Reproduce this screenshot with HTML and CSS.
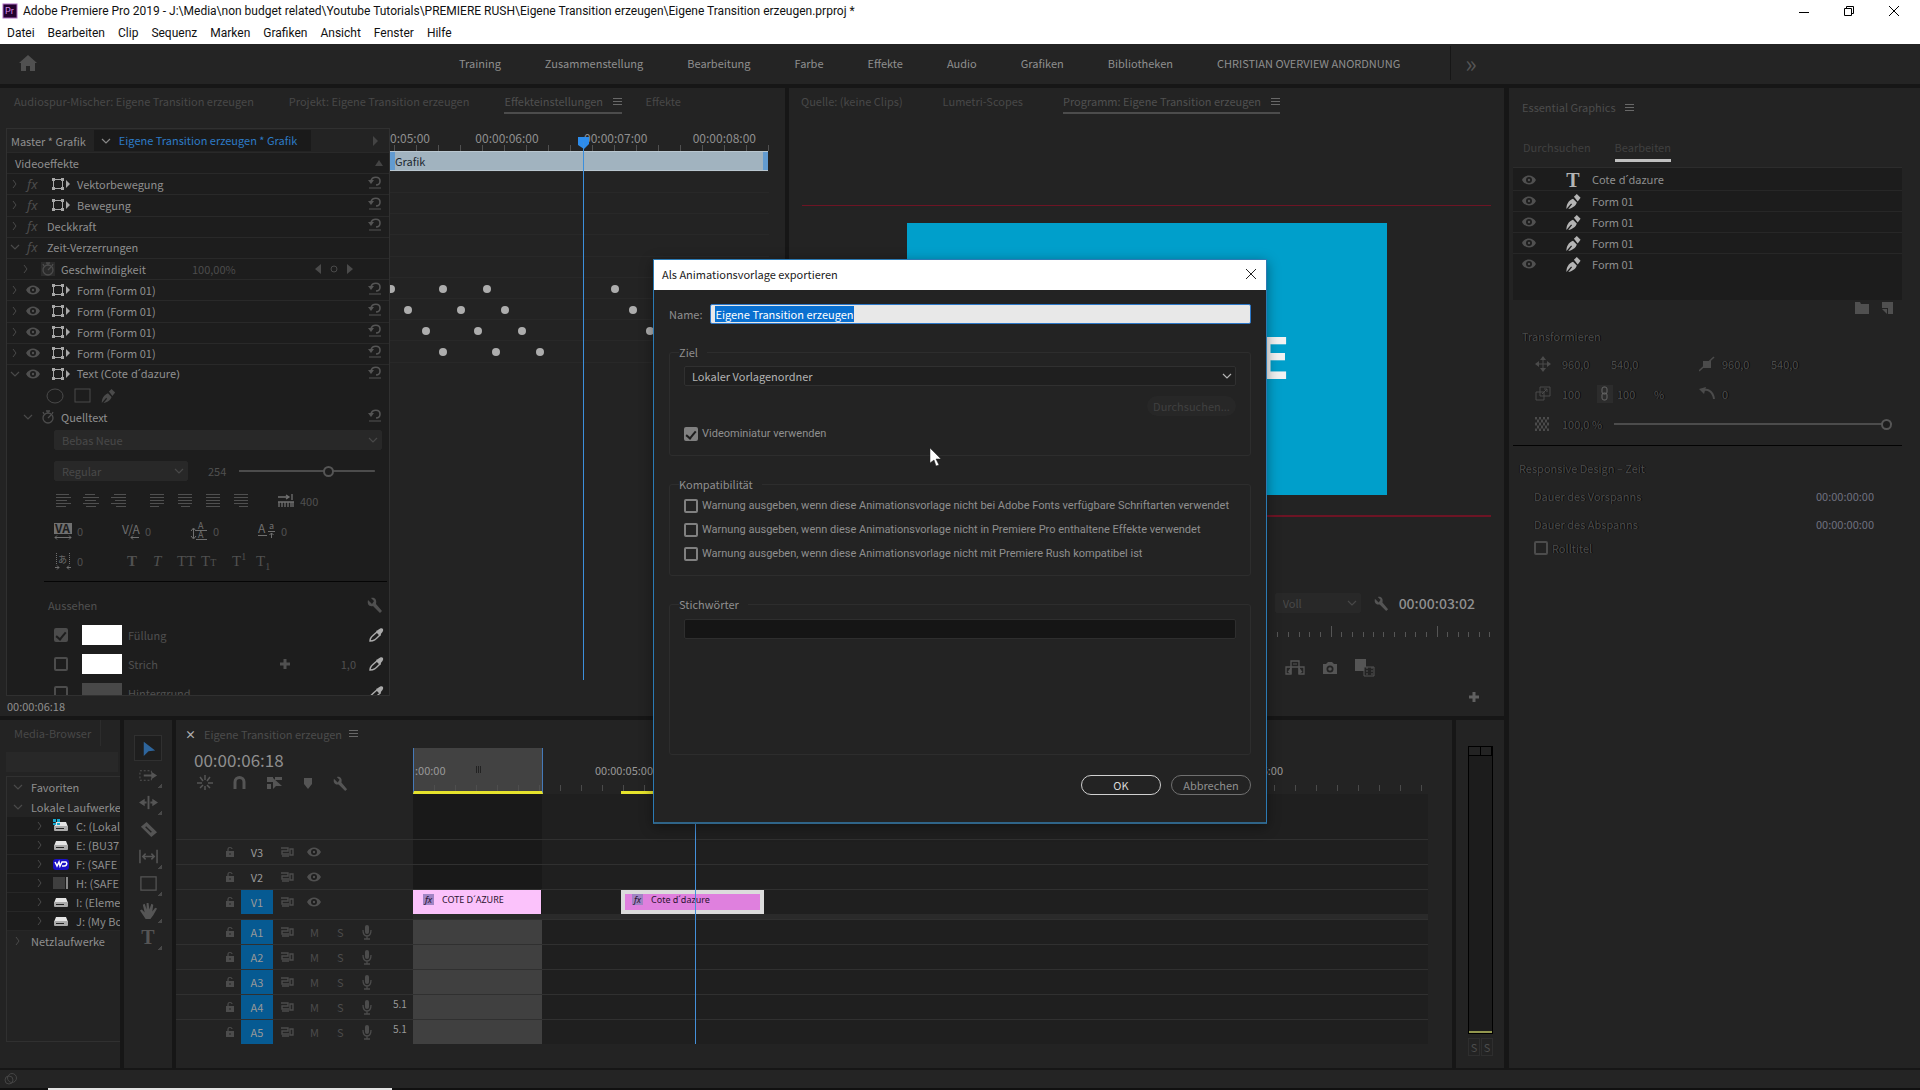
FILE: index.html
```html
<!DOCTYPE html>
<html lang="de">
	<head>
		<meta charset="UTF-8">
		<title>Adobe Premiere Pro 2019</title>
		<link rel="stylesheet" href="styles.css">
	</head>
	<body>
		<!-- shared icons -->
		<svg class="defs" width="0" height="0">
			<symbol id="i-menu" viewBox="0 0 9 9"><path d="M0 1.5h9M0 4.5h9M0 7.5h9" stroke="currentColor"/></symbol>
			<symbol id="i-right" viewBox="0 0 8 10"><path d="M2 1l3 4-3 4" fill="none" stroke="currentColor"/></symbol>
			<symbol id="i-down" viewBox="0 0 10 8"><path d="M1 2l4 4 4-4" fill="none" stroke="currentColor" stroke-width="1.2"/></symbol>
			<symbol id="i-box" viewBox="0 0 20 14"><path d="M2.5 2.5h9v9h-9z" fill="none" stroke="currentColor"/><path d="M1 1h3v3H1zM10 1h3v3h-3zM1 10h3v3H1zM10 10h3v3h-3zM15 3l4 4-4 4z" fill="currentColor"/></symbol>
			<symbol id="i-reset" viewBox="0 0 14 14"><path d="M3 6c1-5 9-5 9 0 0 3-2 4-4 4" fill="none" stroke="currentColor" stroke-width="1.6"/><path d="M0 5h6L3 9zM1 12.5h12v1H1z" fill="currentColor"/></symbol>
			<symbol id="i-eye" viewBox="0 0 14 10"><path d="M0 5c3-6 11-6 14 0-3 6-11 6-14 0z" fill="currentColor"/><circle cx="7" cy="5" r="3" fill="#1d1d1d"/><circle cx="7" cy="5" r="1.2" fill="currentColor"/></symbol>
			<symbol id="i-pen" viewBox="0 0 16 18"><path d="M1 17c0-5 2-9 7-11l4 4c-1 4-5 6-9 7l4-5-1-1z" fill="currentColor"/><path d="M9 4l3-3 4 4-3 4z" fill="currentColor"/></symbol>
			<symbol id="i-clock" viewBox="0 0 14 14"><circle cx="7" cy="8" r="5" fill="none" stroke="currentColor" stroke-width="1.3"/><path d="M5 1h4M7 1v2M2 2l1 2M12 2l-1 2M7 8l3-3" stroke="currentColor" stroke-width="1.3"/></symbol>
			<symbol id="i-wrench" viewBox="0 0 16 16"><path d="M1 3l4 4 2-3-3-3c4-1 6 2 5 6l6 7-2 2-7-7C2 10 0 7 1 3z" fill="currentColor"/></symbol>
			<symbol id="i-drop" viewBox="0 0 16 16"><path d="M2 14c0-3 1-4 7-9l3 3c-5 5-6 6-10 6z" fill="none" stroke="currentColor" stroke-width="1.5"/><path d="M8 4l2-1c3-3 6-2 5 1-1 2-2 2-2 3l-1 2z" fill="currentColor"/></symbol>
			<symbol id="i-plus" viewBox="0 0 12 12"><path d="M6 1v10M1 6h10" stroke="currentColor" stroke-width="3"/></symbol>
			<symbol id="i-lock" viewBox="0 0 10 12"><path d="M1 5h8v6H1z" fill="currentColor"/><path d="M3 5V3c0-2 4-2 4 0" fill="none" stroke="currentColor" stroke-width="1.2"/><path d="M5 7v2" stroke="#222"/></symbol>
			<symbol id="i-sync" viewBox="0 0 14 12"><path d="M0 2h7v3H1v3h7M1 10h7M9 3h3v6H9z" fill="none" stroke="currentColor" stroke-width="1.4"/></symbol>
			<symbol id="i-mic" viewBox="0 0 12 16"><rect x="4" y="1" width="4" height="9" rx="2" fill="currentColor"/><path d="M2 6c0 8 8 8 8 0M6 12v3M3 15h6" fill="none" stroke="currentColor" stroke-width="1.3"/></symbol>
			<symbol id="i-drive" viewBox="0 0 16 14"><path d="M3 3h10l2 5H1z" fill="#e4e4e4"/><rect x="1" y="7" width="14" height="5" rx="1" fill="#aaa"/><path d="M3 9.5h8" stroke="#222"/></symbol>
		</svg>

		<header class="titlebar">
			<svg class="app-icon" viewBox="0 0 16 16"><rect x="1" y="1" width="14" height="14" fill="#23002e" stroke="#b06cc4"/><text x="3" y="11" font-size="9" fill="#d78be8">Pr</text></svg>
			<span class="caption">Adobe Premiere Pro 2019 - J:\Media\non budget related\Youtube Tutorials\PREMIERE RUSH\Eigene Transition erzeugen\Eigene Transition erzeugen.prproj *</span>
			<button class="win-btn" aria-label="Minimieren"><svg width="12" height="12"><path d="M1 7.500h10" stroke="#000"/></svg></button>
			<button class="win-btn" aria-label="Verkleinern"><svg width="12" height="12"><path d="M1.500 3.500h7v7h-7zM3.500 3V1.500h7v7H9" fill="none" stroke="#000"/></svg></button>
			<button class="win-btn" aria-label="Schließen"><svg width="12" height="12"><path d="M1 1l10 10M11 1L1 11" stroke="#000"/></svg></button>
		</header>
		<nav class="menubar">
			<a href="#">Datei</a><a href="#">Bearbeiten</a><a href="#">Clip</a><a href="#">Sequenz</a><a href="#">Marken</a><a href="#">Grafiken</a><a href="#">Ansicht</a><a href="#">Fenster</a><a href="#">Hilfe</a>
		</nav>

		<nav class="workspaces">
			<svg class="home" viewBox="0 0 18 16"><path d="M9 0l9 8h-2v8h-5v-5H7v5H2V8H0z" fill="currentColor"/></svg>
			<a href="#">Training</a><a href="#">Zusammenstellung</a><a href="#">Bearbeitung</a><a href="#">Farbe</a><a href="#">Effekte</a><a href="#">Audio</a><a href="#">Grafiken</a><a href="#">Bibliotheken</a><a href="#">CHRISTIAN OVERVIEW ANORDNUNG</a>
			<span class="more">»</span>
		</nav>

		<main class="workspace">
			<div class="upper">
				<section class="panel effects">
					<div class="tabs effects-tabs">
						<a href="#">Audiospur-Mischer: Eigene Transition erzeugen</a>
						<a href="#">Projekt: Eigene Transition erzeugen</a>
						<a href="#" class="active">Effekteinstellungen <svg class="menu-icon"><use href="#i-menu"/></svg></a>
						<a href="#">Effekte</a>
					</div>
					<div class="effects-body">
						<div class="props">
							<div class="props-head">
								<span>Master * Grafik</span>
								<span class="clip-name"><svg width="10" height="8"><use href="#i-down"/></svg>Eigene Transition erzeugen * Grafik</span>
								<svg width="6" height="10"><path d="M0 0l5 5-5 5z" fill="#444"/></svg>
							</div>
							<div class="rows">
								<div class="row section"><span>Videoeffekte</span><svg class="end" width="9" height="6"><path d="M0 6l4-6 4 6z" fill="#444"/></svg></div>
								<div class="row"><svg class="tw"><use href="#i-right"/></svg><i class="fx">fx</i><svg class="box"><use href="#i-box"/></svg><span>Vektorbewegung</span><svg class="reset"><use href="#i-reset"/></svg></div>
								<div class="row"><svg class="tw"><use href="#i-right"/></svg><i class="fx">fx</i><svg class="box"><use href="#i-box"/></svg><span>Bewegung</span><svg class="reset"><use href="#i-reset"/></svg></div>
								<div class="row"><svg class="tw"><use href="#i-right"/></svg><i class="fx">fx</i><span>Deckkraft</span><svg class="reset"><use href="#i-reset"/></svg></div>
								<div class="row"><svg class="tw"><use href="#i-down"/></svg><i class="fx">fx</i><span>Zeit-Verzerrungen</span></div>
								<div class="row speed"><svg class="tw"><use href="#i-right"/></svg><svg class="watch boxed"><use href="#i-clock"/></svg><span class="prop">Geschwindigkeit</span><span class="value">100,00%</span>
									<svg class="keynav" width="38" height="12"><path d="M6 1v10L0 6zM32 1v10l6-5z" fill="currentColor"/><circle cx="19" cy="6" r="3" fill="none" stroke="currentColor"/></svg></div>
								<div class="row form"><svg class="tw"><use href="#i-right"/></svg><svg class="eye"><use href="#i-eye"/></svg><svg class="box"><use href="#i-box"/></svg><span>Form (Form 01)</span><svg class="reset"><use href="#i-reset"/></svg></div>
								<div class="row form"><svg class="tw"><use href="#i-right"/></svg><svg class="eye"><use href="#i-eye"/></svg><svg class="box"><use href="#i-box"/></svg><span>Form (Form 01)</span><svg class="reset"><use href="#i-reset"/></svg></div>
								<div class="row form"><svg class="tw"><use href="#i-right"/></svg><svg class="eye"><use href="#i-eye"/></svg><svg class="box"><use href="#i-box"/></svg><span>Form (Form 01)</span><svg class="reset"><use href="#i-reset"/></svg></div>
								<div class="row form"><svg class="tw"><use href="#i-right"/></svg><svg class="eye"><use href="#i-eye"/></svg><svg class="box"><use href="#i-box"/></svg><span>Form (Form 01)</span><svg class="reset"><use href="#i-reset"/></svg></div>
								<div class="row form"><svg class="tw"><use href="#i-down"/></svg><svg class="eye"><use href="#i-eye"/></svg><svg class="box"><use href="#i-box"/></svg><span class="accent">Text (Cote d´dazure)</span><svg class="reset"><use href="#i-reset"/></svg></div>
							</div>
							<div class="shapes">
								<svg width="20" height="16"><ellipse cx="10" cy="8" rx="8" ry="7" fill="none" stroke="currentColor"/></svg>
								<svg width="17" height="16"><rect x="1" y="1" width="15" height="13" fill="none" stroke="currentColor"/></svg>
								<svg width="16" height="16"><use href="#i-pen"/></svg>
							</div>
							<div class="row source"><svg class="tw"><use href="#i-down"/></svg><svg class="watch"><use href="#i-clock"/></svg><span>Quelltext</span><svg class="reset"><use href="#i-reset"/></svg></div>
							<div class="text-props">
								<div class="pick dim"><select aria-label="Schriftart"><option>Bebas Neue</option></select><svg><use href="#i-down"/></svg></div>
								<div class="line size-line">
									<div class="pick dim style"><select aria-label="Schriftschnitt"><option>Regular</option></select><svg><use href="#i-down"/></svg></div>
									<label for="fontSize">254</label>
									<input type="range" id="fontSize" min="0" max="100" value="67">
								</div>
								<div class="line aligns">
									<svg width="194" height="16" stroke="currentColor"><path d="M2 1.500h13M2 4.500h15M2 7.500h11M2 10.500h15M2 13.500h10M31 1.500h10M29 4.500h16M31 7.500h11M29 10.500h16M32 13.500h10M60 1.500h12M57 4.500h15M61 7.500h11M57 10.500h15M62 13.500h10M96 1.500h14M96 4.500h14M96 7.500h14M96 10.500h14M96 13.500h9M124 1.500h14M124 4.500h14M124 7.500h14M124 10.500h14M127 13.500h9M152 1.500h14M152 4.500h14M152 7.500h14M152 10.500h14M152 13.500h14M180 1.500h14M180 4.500h14M180 7.500h14M180 10.500h14M185 13.500h9"/></svg>
									<svg class="tab" width="16" height="14"><path d="M0 3h11M8 1l3 2-3 2M14 0v6M0 8h16M1 8v5M4 8v5M7 8v5M10 8v5M13 8v5M15 8v5" fill="none" stroke="currentColor" stroke-width="1.3"/></svg>
									<span>400</span>
								</div>
								<div class="line spacing">
									<span><svg class="glyph"><path d="M0 1h18v11H0z" fill="currentColor"/><text x="1" y="11" class="inv">VA</text><path d="M1 15.500h16M3 13.500l-2 2 2 2M15 13.500l2 2-2 2" fill="none" stroke="currentColor"/></svg>0</span>
									<span><svg class="glyph"><text x="0" y="12">V/A</text><path d="M9 15.500h8M11 13.500l-2 2 2 2" fill="none" stroke="currentColor"/></svg>0</span>
									<span><svg class="glyph"><path d="M3.500 7v9M1 9l2.500-3L6 9M1 14l2.500 3L6 14M6 8.500h11M6 17.500h11" fill="none" stroke="currentColor"/><text x="8" y="7" class="small">A</text><text x="8" y="16" class="small">A</text></svg>0</span>
									<span><svg class="glyph"><text x="0" y="11">A</text><text x="11" y="7" class="small">a</text><path d="M0 13.500h9M10 9.500h7M13.500 16v-5M11.500 13l2-2 2 2" fill="none" stroke="currentColor"/></svg>0</span>
								</div>
								<div class="line styles">
									<span><svg class="glyph"><path d="M2.500 1v11M15.500 1v11" stroke="currentColor" stroke-dasharray="1 1"/><text x="4" y="11" class="small">あ</text><path d="M1 15.500h4M3 13.500l2 2-2 2M17 15.500h-4M15 13.500l-2 2 2 2" fill="none" stroke="currentColor"/></svg>0</span>
									<b class="t1">T</b><i>T</i><span class="caps">TT</span><span class="caps">T<small>T</small></span><span class="caps">T<sup>1</sup></span><span class="caps">T<sub>1</sub></span>
								</div>
							</div>
							<div class="look">
								<div class="look-head">Aussehen <svg><use href="#i-wrench"/></svg></div>
								<label class="paint"><input type="checkbox" checked><span class="swatch"></span>Füllung<svg><use href="#i-drop"/></svg></label>
								<label class="paint"><input type="checkbox"><span class="swatch"></span>Strich<span class="width"><svg class="add"><use href="#i-plus"/></svg>1,0</span><svg><use href="#i-drop"/></svg></label>
								<label class="paint"><input type="checkbox"><span class="swatch grey"></span>Hintergrund<svg><use href="#i-drop"/></svg></label>
							</div>
						</div>
						<div class="keys">
							<div class="key-ruler"><span>0:05:00</span><span>00:00:06:00</span><span>00:00:07:00</span><span>00:00:08:00</span></div>
							<div class="key-clip">Grafik</div>
							<svg class="key-canvas" width="380" height="552">
								<path d="M0 43.500h379M0 64.500h379M0 85.500h379M0 106.500h379M0 128.500h379M0 149.500h379M0 170.500h379M0 191.500h379M0 212.500h379M0 234.500h379" stroke="#282828"/>
								<g fill="#adadad"><circle cx="1" cy="161" r="4"/><circle cx="53" cy="161" r="4"/><circle cx="97" cy="161" r="4"/><circle cx="225" cy="161" r="4"/><circle cx="18" cy="182" r="4"/><circle cx="71" cy="182" r="4"/><circle cx="115" cy="182" r="4"/><circle cx="243" cy="182" r="4"/><circle cx="36" cy="203" r="4"/><circle cx="88" cy="203" r="4"/><circle cx="132" cy="203" r="4"/><circle cx="260" cy="203" r="4"/><circle cx="53" cy="224" r="4"/><circle cx="106" cy="224" r="4"/><circle cx="150" cy="224" r="4"/></g>
								<path d="M188 9h11v7l-5 5-6-4z" fill="#2d8ceb"/><path d="M193.500 14v538" stroke="#3c8fdc"/>
							</svg>
						</div>
					</div>
					<div class="panel-time">00:00:06:18</div>
				</section>

				<section class="panel monitor">
					<div class="tabs monitor-tabs">
						<a href="#">Quelle: (keine Clips)</a>
						<a href="#">Lumetri-Scopes</a>
						<a href="#" class="active">Programm: Eigene Transition erzeugen <svg class="menu-icon"><use href="#i-menu"/></svg></a>
					</div>
					<div class="stage"><div class="frame">E</div></div>
					<div class="monitor-bar">
						<div class="pick dim"><select aria-label="Auflösung"><option>Voll</option></select><svg><use href="#i-down"/></svg></div>
						<svg class="tool"><use href="#i-wrench"/></svg>
						<b>00:00:03:02</b>
					</div>
					<svg class="monitor-ruler" width="220" height="12" stroke="#555"><path d="M1.500 6v5M12.500 6v5M23.500 6v5M33.500 6v5M44.500 6v5M55.500 0v11M65.500 6v5M76.500 6v5M87.500 6v5M97.500 6v5M107.500 6v5M118.500 6v5M129.500 6v5M139.500 6v5M150.500 6v5M161.500 0v11M171.500 6v5M182.500 6v5M192.500 6v5M203.500 6v5M213.500 6v5"/></svg>
					<div class="monitor-tools">
						<svg width="20" height="16"><path d="M6 1h8v6H6zM1 7h5v7H1zM14 7h5v7h-5z" fill="none" stroke="currentColor" stroke-width="1.300"/><path d="M8 4h4M3 12l3-4v6M17 12l-3-4v6" stroke="currentColor" fill="currentColor"/></svg>
						<svg width="14" height="14"><path d="M0 3h3l2-2h4l2 2h3v10H0z" fill="currentColor"/><circle cx="7" cy="8" r="3.500" fill="#232323"/><circle cx="7" cy="8" r="1.800" fill="currentColor"/></svg>
						<svg width="20" height="18"><path d="M0 0h11v12H0z" fill="currentColor"/><path d="M9 8h10v9H9z" fill="#232323" stroke="currentColor"/><path d="M12 8v9M17 8v9" stroke="currentColor" stroke-dasharray="2 1"/></svg>
					</div>
					<svg class="monitor-add"><use href="#i-plus"/></svg>
				</section>
			</div>

			<div class="lower">
				<section class="panel browser">
					<div class="browser-tab">Media-Browser</div>
					<div class="browser-search"></div>
					<ul class="drives">
						<li><svg class="tw"><use href="#i-down"/></svg>Favoriten</li>
						<li><svg class="tw"><use href="#i-down"/></svg>Lokale Laufwerke</li>
						<li class="drive"><svg class="tw"><use href="#i-right"/></svg><svg class="disk"><use href="#i-drive"/><path d="M0 0h3v3H0zM4 0h3v3H4zM0 4h3v2H0zM4 4h3v2H4z" fill="#16a8cf"/></svg>C: (Lokal</li>
						<li class="drive"><svg class="tw"><use href="#i-right"/></svg><svg class="disk"><use href="#i-drive"/></svg>E: (BU37</li>
						<li class="drive"><svg class="tw"><use href="#i-right"/></svg><svg class="disk"><rect y="2" width="16" height="11" rx="3" fill="#1a10c4"/><path d="M2 5l2 4 2-4 1 4 2-4h4c2 2 0 4-2 4H9" fill="none" stroke="#fff" stroke-width="1.500"/></svg>F: (SAFE</li>
						<li class="drive"><svg class="tw"><use href="#i-right"/></svg><svg class="disk"><rect y="1" width="12" height="12" fill="#3f3f3f"/><rect x="13" y="1" width="2" height="12" fill="#888"/></svg>H: (SAFE</li>
						<li class="drive"><svg class="tw"><use href="#i-right"/></svg><svg class="disk"><use href="#i-drive"/></svg>I: (Eleme</li>
						<li class="drive"><svg class="tw"><use href="#i-right"/></svg><svg class="disk"><use href="#i-drive"/></svg>J: (My Bo</li>
						<li><svg class="tw"><use href="#i-right"/></svg>Netzlaufwerke</li>
					</ul>
				</section>
				<section class="panel tools">
					<button class="on" aria-label="Auswahl"><svg viewBox="0 0 20 20"><path d="M5 3l12 9-7 1-5 5z" fill="#2e659c"/></svg></button>
					<button aria-label="Spurauswahl"><svg viewBox="0 0 20 20"><path d="M1 5h12v10H1z" fill="none" stroke="currentColor" stroke-dasharray="2 2"/><path d="M5 9h8V6l6 4-6 4v-3H5z" fill="currentColor"/></svg></button>
					<button aria-label="Löschen und Lücke schließen"><svg viewBox="0 0 20 20"><path d="M10 3v14" stroke="currentColor" stroke-width="2"/><path d="M0 10l6-4v3h2v2H6v3zM20 10l-6-4v3h-2v2h2v3z" fill="currentColor"/></svg></button>
					<button class="plain" aria-label="Rasierklinge"><svg viewBox="0 0 20 20"><path d="M2 7l6-5 11 11-6 5z" fill="currentColor"/><path d="M7 7l6 6" stroke="#222" stroke-width="1.500"/></svg></button>
					<button aria-label="Unterschieben"><svg viewBox="0 0 20 20"><path d="M1 3v14M19 3v14M4 10h12M7 7l-3 3 3 3M13 7l3 3-3 3" fill="none" stroke="currentColor" stroke-width="1.600"/></svg></button>
					<button aria-label="Rechteck"><svg viewBox="0 0 20 20"><path d="M2 3h16v14H2z" fill="none" stroke="currentColor" stroke-width="1.300"/></svg></button>
					<button aria-label="Hand"><svg viewBox="0 0 20 20"><path d="M7 19l-6-9 2-1 3 3-2-8 2-1 2 6V2h2l1 7 2-6 2 1-1 7 3-4 2 1-4 7-3 4z" fill="currentColor"/></svg></button>
					<button class="type" aria-label="Text">T</button>
				</section>
				<section class="panel timeline">
					<div class="heads">
						<div class="seq-tab"><b>×</b><span>Eigene Transition erzeugen</span><svg class="menu-icon"><use href="#i-menu"/></svg></div>
						<div class="seq-time">00:00:06:18</div>
						<div class="seq-tools">
							<svg width="16" height="16"><path d="M8 0v5M8 11v4M0 8h5M11 8h5M3 2l3 4M13 2l-3 4M3 13l3-3M13 13l-3-3" stroke="currentColor" stroke-width="1.500"/></svg>
							<svg width="14" height="14"><path d="M2 13V6c0-6 9-6 9 0v7" fill="none" stroke="currentColor" stroke-width="3"/></svg>
							<svg width="16" height="16"><path d="M0 2h6v5H0zM0 9h4v5H0zM8 2h7v3H8zM6 3l9 8H9l-3 3z" fill="currentColor"/></svg>
							<svg width="10" height="12"><path d="M1 1h8v6l-4 5-4-5z" fill="currentColor"/></svg>
							<svg width="15" height="15"><use href="#i-wrench"/></svg>
						</div>
						<div class="track-heads video" id="videoHeads"></div>
						<div class="track-heads audio" id="audioHeads"></div>
					</div>
					<div class="lanes">
						<div class="time-ruler">
							<div class="range"><span>:00:00</span><svg width="6" height="7"><path d="M.5 0v7M2.500 0v7M4.500 0v7" stroke="#222"/></svg></div>
							<span class="t5">00:00:05:00</span>
							<span class="t15">00:00:15:00</span>
							<i class="render"></i>
						</div>
						<div class="lane gap"></div>
						<div class="lane"></div>
						<div class="lane"></div>
						<div class="lane clips">
							<div class="clip one"><i>fx</i>COTE D´AZURE</div>
							<div class="clip two"><i>fx</i>Cote d´dazure</div>
						</div>
						<div class="split"></div>
						<div class="lane sound"></div><div class="lane sound"></div><div class="lane sound"></div><div class="lane sound"></div><div class="lane sound"></div>
						<i class="playhead"></i>
					</div>
				</section>
				<section class="panel meters">
					<div class="meter"><i></i><i></i></div>
					<div class="solo"><button>S</button><button>S</button></div>
				</section>
			</div>

			<aside class="panel graphics">
				<div class="graphics-title">Essential Graphics <svg class="menu-icon"><use href="#i-menu"/></svg></div>
				<div class="graphics-tabs"><a href="#">Durchsuchen</a><a href="#" class="active">Bearbeiten</a></div>
				<ul class="layers">
					<li><svg class="eye"><use href="#i-eye"/></svg><b class="kind type">T</b><span class="accent">Cote d´dazure</span></li>
					<li><svg class="eye"><use href="#i-eye"/></svg><svg class="kind"><use href="#i-pen"/></svg>Form 01</li>
					<li><svg class="eye"><use href="#i-eye"/></svg><svg class="kind"><use href="#i-pen"/></svg>Form 01</li>
					<li><svg class="eye"><use href="#i-eye"/></svg><svg class="kind"><use href="#i-pen"/></svg>Form 01</li>
					<li><svg class="eye"><use href="#i-eye"/></svg><svg class="kind"><use href="#i-pen"/></svg>Form 01</li>
				</ul>
				<div class="layer-tools">
					<svg width="14" height="12"><path d="M0 0h5l1 2h8v10H0z" fill="currentColor"/></svg>
					<svg width="11" height="12"><path d="M0 0h11v12H6V6H0z" fill="currentColor"/><path d="M0 7l5 5V7z" fill="currentColor"/></svg>
				</div>
				<div class="transform engraved">
					<h3>Transformieren</h3>
					<div class="t-row">
						<svg width="16" height="16"><path d="M8 1v14M1 8h14" stroke="currentColor"/><path d="M8 0l3 4H5zM8 16l3-4H5zM0 8l4-3v6zM16 8l-4-3v6z" fill="currentColor"/></svg>
						<span>960,0</span><span>540,0</span>
						<svg width="16" height="16"><path d="M0 15L15 1" stroke="currentColor" stroke-width="1.500"/><path d="M4 5h8v7H4z" fill="currentColor"/></svg>
						<span>960,0</span><span>540,0</span>
					</div>
					<div class="t-row scale">
						<svg width="16" height="16"><path d="M5 1h10v9H5zM1 6h8v8H1zM7 8l5-5M9 3h3v3" fill="none" stroke="currentColor"/></svg>
						<span>100</span>
						<svg class="link" width="18" height="20"><path d="M1 1h16v18H1z" fill="#2c2c2c"/><rect x="6" y="3" width="5" height="7" rx="2" fill="none" stroke="#666"/><rect x="6" y="9" width="5" height="7" rx="2" fill="none" stroke="#666"/></svg>
						<span>100</span><span>%</span>
						<svg width="16" height="14"><path d="M3 4c5-3 11 0 12 8" fill="none" stroke="currentColor" stroke-width="2"/><path d="M0 2l7-2-2 7z" fill="currentColor"/></svg>
						<span>0</span>
					</div>
					<div class="t-row opacity">
						<svg width="14" height="14"><path d="M0 1h14M0 7h14M0 13h14" stroke="currentColor" stroke-width="3" stroke-dasharray="2 2"/><path d="M2 4h12M2 10h12" stroke="currentColor" stroke-width="3" stroke-dasharray="2 2"/></svg>
						<label for="opacity">100,0 %</label>
						<input type="range" id="opacity" min="0" max="100" value="100">
					</div>
				</div>
				<div class="responsive">
					<h3 class="engraved">Responsive Design – Zeit</h3>
					<div class="r-row"><span class="engraved">Dauer des Vorspanns</span><b>00:00:00:00</b></div>
					<div class="r-row"><span class="engraved">Dauer des Abspanns</span><b>00:00:00:00</b></div>
					<label class="r-row roll"><input type="checkbox"><span class="engraved">Rolltitel</span></label>
				</div>
			</aside>
		</main>

		<footer class="statusbar"><svg width="14" height="14" fill="none" stroke="#444"><circle cx="8" cy="6" r="4.500"/><circle cx="5" cy="8" r="4"/></svg></footer>
		<div class="taskbar"><i></i></div>

		<div class="dialog" role="dialog" aria-labelledby="dlgTitle">
			<div class="dialog-title"><span id="dlgTitle">Als Animationsvorlage exportieren</span><button aria-label="Schließen"><svg width="12" height="12"><path d="M1 1l10 10M11 1L1 11" stroke="#222"/></svg></button></div>
			<form class="dialog-body">
				<div class="name-row"><label for="tplName">Name:</label><input type="text" id="tplName" value="Eigene Transition erzeugen"></div>
				<fieldset class="target">
					<legend>Ziel</legend>
					<div class="pick"><select aria-label="Ziel"><option>Lokaler Vorlagenordner</option></select><svg><use href="#i-down"/></svg></div>
					<button type="button" class="browse" disabled>Durchsuchen...</button>
					<label class="check"><input type="checkbox" checked>Videominiatur verwenden</label>
				</fieldset>
				<fieldset class="compat">
					<legend>Kompatibilität</legend>
					<label class="check"><input type="checkbox">Warnung ausgeben, wenn diese Animationsvorlage nicht bei Adobe Fonts verfügbare Schriftarten verwendet</label>
					<label class="check"><input type="checkbox">Warnung ausgeben, wenn diese Animationsvorlage nicht in Premiere Pro enthaltene Effekte verwendet</label>
					<label class="check"><input type="checkbox">Warnung ausgeben, wenn diese Animationsvorlage nicht mit Premiere Rush kompatibel ist</label>
				</fieldset>
				<fieldset class="keywords">
					<legend>Stichwörter</legend>
					<input type="text" aria-label="Stichwörter">
				</fieldset>
				<div class="actions"><button type="button" class="ok">OK</button><button type="button">Abbrechen</button></div>
			</form>
			<svg class="cursor" width="13" height="20"><path d="M1 1v15l4-3 2 6 3-1-3-6h5z" fill="#fff" stroke="#222" stroke-width=".5"/></svg>
		</div>
		<script src="main.js"></script>
	</body>
</html>
```
FILE: styles.css
```css
* {
	box-sizing: border-box;
}
body {
	display: flex;
	flex-direction: column;
	min-height: 100vh;
	margin: 0;
	background-color: #161616;
	color: #8f8f8f;
	font: 11px/16px "Noto Sans CJK SC", "Noto Sans", sans-serif;
	overflow: hidden;
}
a {
	color: inherit;
	text-decoration: none;
}
button, input, select {
	font: inherit;
	color: inherit;
	margin: 0;
}
button {
	padding: 0;
	border: none;
	background: none;
}
svg {
	flex: none;
}
ul {
	list-style: none;
	margin: 0;
	padding: 0;
}
h3 {
	margin: 0;
	font-size: 11px;
	font-weight: normal;
}
.defs {
	position: absolute;
}
.accent {
	font-family: "Noto Sans", sans-serif;
}

/* window frame */
.titlebar {
	display: flex;
	align-items: center;
	height: 22px;
	padding: 0 16px 0 2px;
	background-color: #fff;
	color: #111;
	font: 12px/22px Roboto, sans-serif;
}
.app-icon {
	width: 16px;
	height: 16px;
}
.caption {
	flex: 1;
	margin-left: 5px;
}
.win-btn {
	width: 45px;
	text-align: center;
}
.win-btn svg {
	display: block;
	margin: 0 auto;
}
.win-btn:last-child {
	margin-right: -12px;
}
.menubar {
	display: flex;
	gap: 13px;
	height: 22px;
	padding-left: 7px;
	background-color: #fff;
	color: #111;
	font: 12px/22px Roboto, sans-serif;
}
.workspaces {
	display: flex;
	align-items: center;
	height: 40px;
	margin-bottom: 4px;
	padding-bottom: 2px;
	background-color: #242424;
}
.workspaces a {
	margin-right: 44px;
}
.home {
	width: 18px;
	height: 16px;
	margin: 0 422px 0 19px;
	color: #505050;
}
.more {
	margin-left: 6px;
	padding-left: 14px;
	border-left: 1px solid #161616;
	color: #555;
	font-size: 24px;
	line-height: 34px;
}

/* panels */
.workspace {
	flex: 1;
	display: grid;
	grid-template-columns: minmax(0, 1fr) 411px;
	grid-template-rows: 628px minmax(0, 1fr);
	gap: 4px 5px;
}
.upper {
	display: grid;
	grid-template-columns: 785fr 715fr;
	gap: 4px;
	min-width: 0;
}
.lower {
	display: grid;
	grid-template-columns: 120px 48px minmax(0, 1fr) 48px;
	gap: 4px;
}
.panel {
	min-width: 0;
	background-color: #232323;
}
.tabs {
	display: flex;
	height: 40px;
	padding-top: 5px;
	color: #484848;
	white-space: nowrap;
}
.tabs a {
	height: 21px;
}
.tabs .active {
	border-bottom: 2px solid #4c4c4c;
	color: #505050;
}
.menu-icon {
	width: 9px;
	height: 9px;
	margin-left: 7px;
	color: #686868;
}
.effects-tabs {
	gap: 24px;
	padding-left: 14px;
}
.effects-tabs a:nth-child(-n+2) {
	margin-right: 11px;
}
.effects {
	display: flex;
	flex-direction: column;
}
.effects-body {
	flex: 1;
	display: grid;
	grid-template-columns: 384px 380px;
	min-height: 0;
	padding-left: 6px;
}
.props {
	height: 568px;
	border: 1px solid #303030;
	background-color: #1d1d1d;
	overflow: hidden;
}
.props-head {
	display: flex;
	align-items: center;
	height: 23px;
	padding: 0 10px 0 4px;
	background-color: #232323;
}
.clip-name {
	height: 21px;
	margin: 0 auto 0 8px;
	padding: 2px 14px 0 7px;
	background-color: #1a1a1a;
	color: #2d7bc6;
}
.clip-name svg {
	margin-right: 8px;
	color: #888;
}
.rows {
	display: flex;
	flex-direction: column;
	height: 233px;
}
.row {
	flex: 1;
	display: flex;
	align-items: center;
	padding-bottom: 1px;
	border-top: 1px solid #292929;
}
.row span {
	white-space: nowrap;
}
.section {
	padding-left: 8px;
}
.end {
	margin: 0 5px 0 auto;
}
.tw {
	width: 10px;
	height: 10px;
	margin: 0 7px 0 3px;
	color: #4a4a4a;
}
.fx {
	width: 20px;
	color: #4c4c4c;
	font: italic 13px/16px "Noto Sans", sans-serif;
}
.box {
	width: 20px;
	height: 14px;
	margin: 0 6px 0 4px;
	color: #a8a8a8;
}
.reset {
	width: 14px;
	height: 14px;
	margin: 0 7px 4px auto;
	color: #555;
}
.eye {
	width: 14px;
	height: 10px;
	color: #505050;
}
.form .tw {
	margin-right: 6px;
}
.form .box {
	margin-left: 11px;
}
.speed .tw {
	margin: 0 10px 0 14px;
}
.watch {
	width: 14px;
	height: 14px;
	margin-right: 6px;
	color: #4c4c4c;
}
.watch.boxed {
	background-color: #2b2b2b;
}
.prop {
	width: 131px;
}
.value {
	color: #4c4c4c;
}
.keynav {
	margin: 0 36px 0 auto;
	color: #4a4a4a;
}
.shapes {
	display: flex;
	gap: 9px;
	align-items: center;
	height: 22px;
	padding-left: 38px;
	color: #4a4a4a;
}
.source {
	height: 20px;
	border: none;
}
.source .tw {
	margin: 0 8px 0 16px;
}
.text-props {
	padding: 3px 7px 0 47px;
	color: #505050;
}
.pick {
	display: flex;
	align-items: center;
	border: 1px solid #303030;
	border-radius: 2px;
	background-color: #1f1f1f;
}
.pick select {
	flex: 1;
	min-width: 0;
	height: 18px;
	padding: 0 0 0 7px;
	border: none;
	background: none;
	appearance: none;
}
.pick svg {
	width: 10px;
	height: 8px;
	margin-right: 3px;
}
.pick.dim {
	border-color: #282828;
	background-color: #282828;
	color: #484848;
}
.line {
	display: flex;
	align-items: center;
	height: 30px;
}
.size-line {
	gap: 20px;
	margin-top: 6px;
	padding-right: 7px;
}
.size-line label {
	margin-right: -7px;
}
.style {
	width: 134px;
}
input[type=range] {
	appearance: none;
	flex: 1;
	min-width: 0;
	height: 12px;
	background: linear-gradient(#4c4c4c, #4c4c4c) center / 100% 2px no-repeat;
}
input[type=range]::-webkit-slider-thumb {
	appearance: none;
	width: 11px;
	height: 11px;
	border: 2px solid #555;
	border-radius: 50%;
	background-color: #1d1d1d;
}
.tab {
	margin: 0 6px 0 30px;
	color: #707070;
}
.spacing > span {
	display: flex;
	align-items: center;
	width: 68px;
}
.glyph {
	width: 18px;
	height: 18px;
	margin-right: 5px;
	color: #707070;
	fill: #707070;
	font-size: 12px;
	overflow: visible;
}
.glyph .inv {
	fill: #1d1d1d;
	font-weight: bold;
}
.glyph .small {
	font-size: 9px;
}
.styles {
	font: 15px/20px "Liberation Serif", serif;
}
.styles > span:first-child {
	display: flex;
	align-items: center;
	width: 73px;
	font: 11px/16px "Noto Sans CJK SC", sans-serif;
}
.t1 {
	width: 26px;
}
.styles i {
	width: 24px;
}
.caps {
	width: 24px;
	white-space: nowrap;
}
.caps:nth-of-type(3) {
	width: 31px;
}
.caps small, .caps sup, .caps sub {
	font-size: 10px;
	line-height: 0;
}
.look {
	margin: 5px 2px 0 37px;
	border-top: 1px solid #050505;
	color: #505050;
}
.look-head {
	display: flex;
	justify-content: space-between;
	align-items: center;
	height: 38px;
	padding: 7px 4px 0;
}
.look-head svg {
	width: 16px;
	height: 16px;
}
.paint {
	display: flex;
	align-items: center;
	height: 29px;
	padding: 0 3px 0 10px;
}
.paint > svg {
	width: 16px;
	height: 16px;
	margin-left: auto;
	color: #aaa;
}
.swatch {
	width: 40px;
	height: 20px;
	margin: 0 6px 0 14px;
	background-color: #fff;
}
.swatch.grey {
	background-color: #484848;
}
.width {
	display: flex;
	gap: 50px;
	align-items: center;
	margin: 0 -3px 0 auto;
}
.width ~ svg {
	margin-left: 15px;
}
.add {
	width: 12px;
	height: 12px;
}
input[type=checkbox] {
	appearance: none;
	display: grid;
	place-items: center;
	flex: none;
	width: 14px;
	height: 14px;
	border: 2px solid #4c4c4c;
	border-radius: 2px;
}
input[type=checkbox]:checked {
	background-color: #4c4c4c;
}
input[type=checkbox]:checked::after {
	content: "";
	width: 4px;
	height: 8px;
	margin-bottom: 2px;
	border: solid #1d1d1d;
	border-width: 0 2px 2px 0;
	transform: rotate(40deg);
}
.panel-time {
	height: 20px;
	padding-left: 7px;
	line-height: 20px;
}
.keys {
	position: relative;
	overflow: hidden;
}
.key-ruler {
	position: relative;
	display: flex;
	justify-content: space-between;
	height: 23px;
	padding: 2px 14px 0 0;
	background: repeating-linear-gradient(90deg, #505050 0 1px, transparent 1px 22px) 4px 100% / 100% 6px no-repeat;
	font-size: 12px;
}
.key-clip {
	height: 20px;
	margin-right: 2px;
	padding-left: 5px;
	border: solid #b9c7d0;
	border-width: 1px 0;
	background: linear-gradient(90deg, #629bd0 5px, #a1b3bf 5px calc(100% - 5px), #629bd0 calc(100% - 5px));
	color: #1c2830;
	line-height: 18px;
}
.key-canvas {
	position: absolute;
	top: 0;
	left: 0;
}

/* program monitor */
.monitor-tabs {
	gap: 40px;
	padding-left: 12px;
}
.monitor {
	display: flex;
	flex-direction: column;
}
.stage {
	display: flex;
	justify-content: center;
	height: 312px;
	margin: 77px 13px 0 13px;
	padding: 17px 0 20px;
	border: solid #6d1424;
	border-width: 1px 0 2px;
}
.frame {
	width: 480px;
	padding: 93px 97px 0 0;
	background-color: #009fcb;
	color: #f2f2f2;
	font: bold 60px/80px "Noto Sans", sans-serif;
	text-align: right;
}
.monitor-bar {
	display: flex;
	align-items: center;
	justify-content: flex-end;
	height: 20px;
	margin: 76px 29px 0 0;
}
.monitor-bar .pick {
	width: 86px;
}
.monitor-bar b {
	font-size: 14px;
	font-weight: 500;
}
.tool {
	width: 15px;
	height: 15px;
	margin: 0 10px 0 13px;
	color: #555;
}
.monitor-ruler {
	margin: 13px 8px 0 auto;
}
.monitor-tools {
	display: flex;
	gap: 18px;
	justify-content: flex-end;
	align-items: center;
	height: 20px;
	margin: 20px 129px 0 0;
	color: #555;
}
.monitor-add {
	width: 12px;
	height: 12px;
	margin: 13px 24px 0 auto;
	color: #606060;
}

/* media browser and tools */
.browser {
	overflow: hidden;
}
.browser-tab {
	width: 101px;
	height: 26px;
	padding: 5px 0 0 14px;
	border-right: 1px solid #2c2c2c;
	color: #484848;
}
.browser-search {
	height: 20px;
	margin: 6px 2px 4px 6px;
	background-color: #282828;
}
.drives {
	height: 266px;
	margin-left: 6px;
	border: 1px solid #303030;
	border-right: none;
}
.drives li {
	display: flex;
	align-items: center;
	height: 19px;
	padding-left: 3px;
	white-space: nowrap;
}
.drives li:nth-child(-n+2) {
	height: 20px;
}
.drives .tw {
	margin-right: 8px;
}
.drives .drive {
	padding-left: 25px;
	border-bottom: 1px solid #272727;
	background-color: #1c1c1c;
}
.disk {
	width: 16px;
	height: 14px;
	margin-right: 7px;
}
.tools {
	display: flex;
	flex-direction: column;
	align-items: center;
	gap: 1px;
	padding-top: 15px;
	color: #555;
}
.tools button {
	display: grid;
	place-items: center;
	width: 28px;
	height: 26px;
	background: linear-gradient(135deg, transparent 50%, #484848 50%) 100% 100% / 4px 4px no-repeat;
}
.tools .plain {
	background: none;
}
.tools .on {
	border: 1px solid #303030;
	background: #1e1e1e;
}
.tools svg {
	width: 19px;
	height: 19px;
}
.type {
	font: bold 20px/18px "Liberation Serif", serif;
	text-align: center;
}

/* timeline */
.timeline {
	display: grid;
	grid-template-columns: 237px minmax(0, 1fr);
	padding-right: 24px;
}
.seq-tab {
	display: flex;
	align-items: center;
	height: 27px;
	padding-left: 9px;
	color: #4c4c4c;
	white-space: nowrap;
}
.seq-tab b {
	width: 19px;
	color: #b0b0b0;
}
.seq-time {
	padding-left: 18px;
	font-size: 17px;
	line-height: 26px;
}
.seq-tools {
	display: flex;
	gap: 20px;
	align-items: center;
	height: 18px;
	margin: 1px 0 47px;
	padding-left: 21px;
	color: #555;
}
.video {
	margin-bottom: 5px;
}
.track {
	display: flex;
	align-items: center;
	height: 25px;
	padding-left: 49px;
	border-top: 1px solid #303030;
	color: #4c4c4c;
}
.track b {
	width: 32px;
	height: 24px;
	margin: 0 8px 0 6px;
	color: #999;
	font-weight: normal;
	line-height: 24px;
	text-align: center;
}
.track .on {
	background-color: #065a92;
}
.track .lock {
	width: 10px;
	height: 12px;
}
.track .sync {
	width: 14px;
	height: 12px;
	margin-right: 12px;
}
.track span {
	width: 27px;
	padding-left: 3px;
}
.track .mic {
	width: 12px;
	height: 16px;
}
.track em {
	margin: -7px 0 0 20px;
	color: #999;
	font-size: 10px;
	font-style: normal;
}
.lanes {
	position: relative;
	height: 324px;
	background-color: #1f1f1f;
}
.time-ruler {
	position: relative;
	height: 74px;
	background: repeating-linear-gradient(90deg, #4a4a4a 0 1px, transparent 1px 21px) 0 65px / 100% 6px no-repeat #232323;
}
/* ruler labels and render bar sit at their time positions */
.time-ruler > span, .render, .range {
	position: absolute;
}
.range {
	display: flex;
	align-items: center;
	justify-content: space-between;
	top: 28px;
	left: 0;
	width: 130px;
	height: 46px;
	padding: 0 60px 0 1px;
	border: solid #4579b8;
	border-width: 0 1px;
	border-bottom: 3px solid #e6e32c;
	background-color: rgba(80, 80, 80, .7);
	color: #999;
}
.t5, .t15 {
	top: 42px;
	color: #999;
}
.t5 {
	left: 182px;
}
.t15 {
	left: 812px;
}
.render {
	left: 208px;
	bottom: 0;
	width: 143px;
	height: 3px;
	background-color: #e6e32c;
}
.lane {
	height: 25px;
	border-top: 1px solid #303030;
	background: linear-gradient(#191919, #191919) 0 0 / 129px 100% no-repeat;
}
.lane.gap {
	height: 45px;
	border: none;
}
.sound {
	background: linear-gradient(#404040, #404040) 0 0 / 129px 100% no-repeat;
}
.split {
	height: 5px;
	background-color: #2a2a2a;
}
.clips {
	position: relative;
}
.clip {
	position: absolute;
	top: 0;
	height: 24px;
	color: #2b1230;
	font: 9px/20px "Noto Sans", sans-serif;
	white-space: nowrap;
}
.clip i {
	display: inline-block;
	width: 11px;
	height: 11px;
	margin-right: 8px;
	background-color: #a184c4;
	line-height: 11px;
	text-align: center;
}
.one {
	left: 0;
	width: 128px;
	padding-left: 10px;
	background-color: #fbc2fb;
}
.two {
	left: 208px;
	width: 143px;
	padding-left: 7px;
	border: 4px solid #dcdcdc;
	background-color: #df80de;
	line-height: 10px;
}
.playhead {
	position: absolute;
	top: 0;
	bottom: 0;
	left: 282px;
	width: 1px;
	background-color: #4490da;
}
.meters {
	padding: 26px 11px 0 12px;
}
.meter {
	display: grid;
	grid-template-columns: 1fr 1fr;
	height: 288px;
	border: 1px solid #000;
	background: linear-gradient(#232323 8px, #000 8px 9px, #1c1c1c 9px);
}
.meter i {
	border-bottom: 2px solid #93974f;
	background: linear-gradient(#000, #000) 100% 0 / 1px 9px no-repeat;
}
.solo {
	display: flex;
	gap: 1px;
	margin-top: 4px;
}
.solo button {
	flex: 1;
	border: 1px solid #2e2e2e;
	color: #4c4c4c;
}

/* essential graphics */
.graphics {
	grid-column: 2;
	grid-row: 1 / 3;
}
.graphics-title {
	height: 47px;
	padding: 11px 13px 0;
	color: #4c4c4c;
}
.graphics-tabs {
	display: flex;
	gap: 24px;
	height: 32px;
	padding: 4px 0 0 14px;
	color: #404040;
}
.graphics-tabs a {
	height: 23px;
}
.graphics-tabs .active {
	border-bottom: 3px solid #c0c0c0;
}
.layers {
	height: 133px;
	margin: 0 18px 0 4px;
	padding-top: 1px;
	border-top: 1px solid #2c2c2c;
	background-color: #1c1c1c;
}
.layers li {
	display: flex;
	align-items: center;
	height: 21px;
	padding-left: 9px;
}
.layers li + li {
	border-top: 1px solid #272727;
}
.kind {
	width: 16px;
	height: 17px;
	margin: 0 11px 0 29px;
	color: #b4b4b4;
}
.layer-tools {
	display: flex;
	gap: 13px;
	justify-content: flex-end;
	height: 28px;
	padding: 2px 27px 0 0;
	color: #505050;
}
.engraved {
	color: #4b4b4b;
	text-shadow: 1px 0 #0a0a0a, -1px 0 #151515;
}
.transform {
	margin: 0 18px 0 4px;
	padding: 0 10px 6px 9px;
	border-bottom: 1px solid #030303;
}
.t-row {
	display: grid;
	grid-template-columns: 27px 49px 88px 23px 49px 1fr;
	align-items: center;
	height: 30px;
	margin-left: 13px;
}
.t-row:nth-child(2) {
	margin-top: 5px;
}
.scale {
	grid-template-columns: 27px 34px 21px 37px 45px 23px 1fr;
}
.opacity {
	grid-template-columns: 27px 52px 1fr;
}
.opacity label {
	white-space: nowrap;
}
.responsive {
	padding: 14px 46px 0 10px;
}
.r-row {
	display: flex;
	justify-content: space-between;
	height: 28px;
	padding-left: 15px;
}
.responsive h3 {
	margin-bottom: 12px;
}
.r-row b {
	color: #6f7180;
	font-weight: normal;
}
.roll {
	align-items: center;
	justify-content: flex-start;
	gap: 4px;
	height: 16px;
	margin-top: -4px;
}

/* bottom edge */
.statusbar {
	height: 18px;
	margin-top: 2px;
	padding: 2px 4px;
	background-color: #242424;
}
.taskbar {
	height: 2px;
	padding-left: 48px;
	background-color: #101010;
}
.taskbar i {
	display: block;
	width: 344px;
	height: 2px;
	background-color: #e4e4e4;
}

/* export dialog */
.dialog {
	position: absolute;
	top: 259px;
	left: calc(50% - 307px);
	width: 614px;
	border: 1px solid #2b7ab4;
	border-bottom: 2px solid #2f6488;
	background-color: #232323;
	box-shadow: 0 3px 12px rgba(0, 0, 0, .4);
}
.dialog-title {
	display: flex;
	align-items: center;
	justify-content: space-between;
	height: 30px;
	padding: 0 9px 2px 8px;
	background-color: #fff;
	color: #222;
}
.dialog-title svg {
	display: block;
}
.dialog-body {
	padding: 14px 15px 27px 15px;
}
.name-row {
	display: flex;
	align-items: center;
	gap: 8px;
	margin-bottom: 20px;
}
.name-row input {
	flex: 1;
	height: 20px;
	padding: 0 4px;
	border: 1px solid #2d78c8;
	border-radius: 2px;
	outline: none;
	background-color: #e8e8e8;
	color: #222;
}
.name-row input::selection {
	background-color: #0a70d0;
	color: #fff;
}
fieldset {
	min-width: 0;
	margin: 0;
	padding: 0 14px;
	border: 1px solid #2d2d2d;
	border-radius: 3px;
}
legend {
	margin-left: -5px;
	padding: 0 9px 0 0;
}
.target {
	height: 112px;
	margin-bottom: 20px;
}
.target .pick {
	margin-top: 6px;
	color: #b4b4b4;
}
.browse {
	display: block;
	width: 89px;
	height: 20px;
	margin: 10px 0 11px auto;
	border-radius: 10px;
	background-color: #272727;
	color: #404040;
}
.check {
	display: flex;
	align-items: center;
	gap: 4px;
	height: 14px;
	font-family: Roboto, sans-serif;
	white-space: nowrap;
}
.check input[type=checkbox] {
	border-color: #808080;
}
.check input[type=checkbox]:checked {
	background-color: #808080;
}
.compat {
	height: 100px;
	margin-bottom: 20px;
}
.compat .check {
	margin: 7px 0 10px;
}
.compat .check + .check {
	margin-top: 0;
}
.keywords {
	height: 159px;
	margin-bottom: 20px;
}
.keywords input {
	width: 100%;
	height: 20px;
	margin-top: 7px;
	border: 1px solid #2e2e2e;
	border-radius: 2px;
	background-color: #151515;
}
.actions {
	display: flex;
	gap: 10px;
	justify-content: flex-end;
}
.actions button {
	width: 80px;
	height: 20px;
	border: 1px solid #707070;
	border-radius: 10px;
	line-height: 16px;
}
.actions .ok {
	border-color: #d0d0d0;
	color: #d8d8d8;
}
.cursor {
	position: absolute;
	top: 187px;
	left: 275px;
}
```
FILE: main.js
```javascript
(function() {
	function icon(name, cls) {
		return '<svg class="' + cls + '"><use href="#i-' + name + '"/></svg>';
	}
	function track(name, on, tail) {
		return '<div class="track">' + icon('lock', 'lock') + '<b' + (on ? ' class="on"' : '') + '>' + name + '</b>' + icon('sync', 'sync') + tail + '</div>';
	}
	var video = ['V3', 'V2', 'V1'];
	var audio = ['A1', 'A2', 'A3', 'A4', 'A5'];
	var html = '';
	for (var i = 0; i < video.length; i += 1) {
		html += track(video[i], video[i] == 'V1', icon('eye', 'eye'));
	}
	document.getElementById('videoHeads').innerHTML = html;
	html = '';
	for (i = 0; i < audio.length; i += 1) {
		html += track(audio[i], true, '<span>M</span><span>S</span>' + icon('mic', 'mic') + (i > 2 ? '<em>5.1</em>' : ''));
	}
	document.getElementById('audioHeads').innerHTML = html;
	// name field starts with its text selected
	var nameInput = document.getElementById('tplName');
	nameInput.focus();
	nameInput.select();
}());
```
